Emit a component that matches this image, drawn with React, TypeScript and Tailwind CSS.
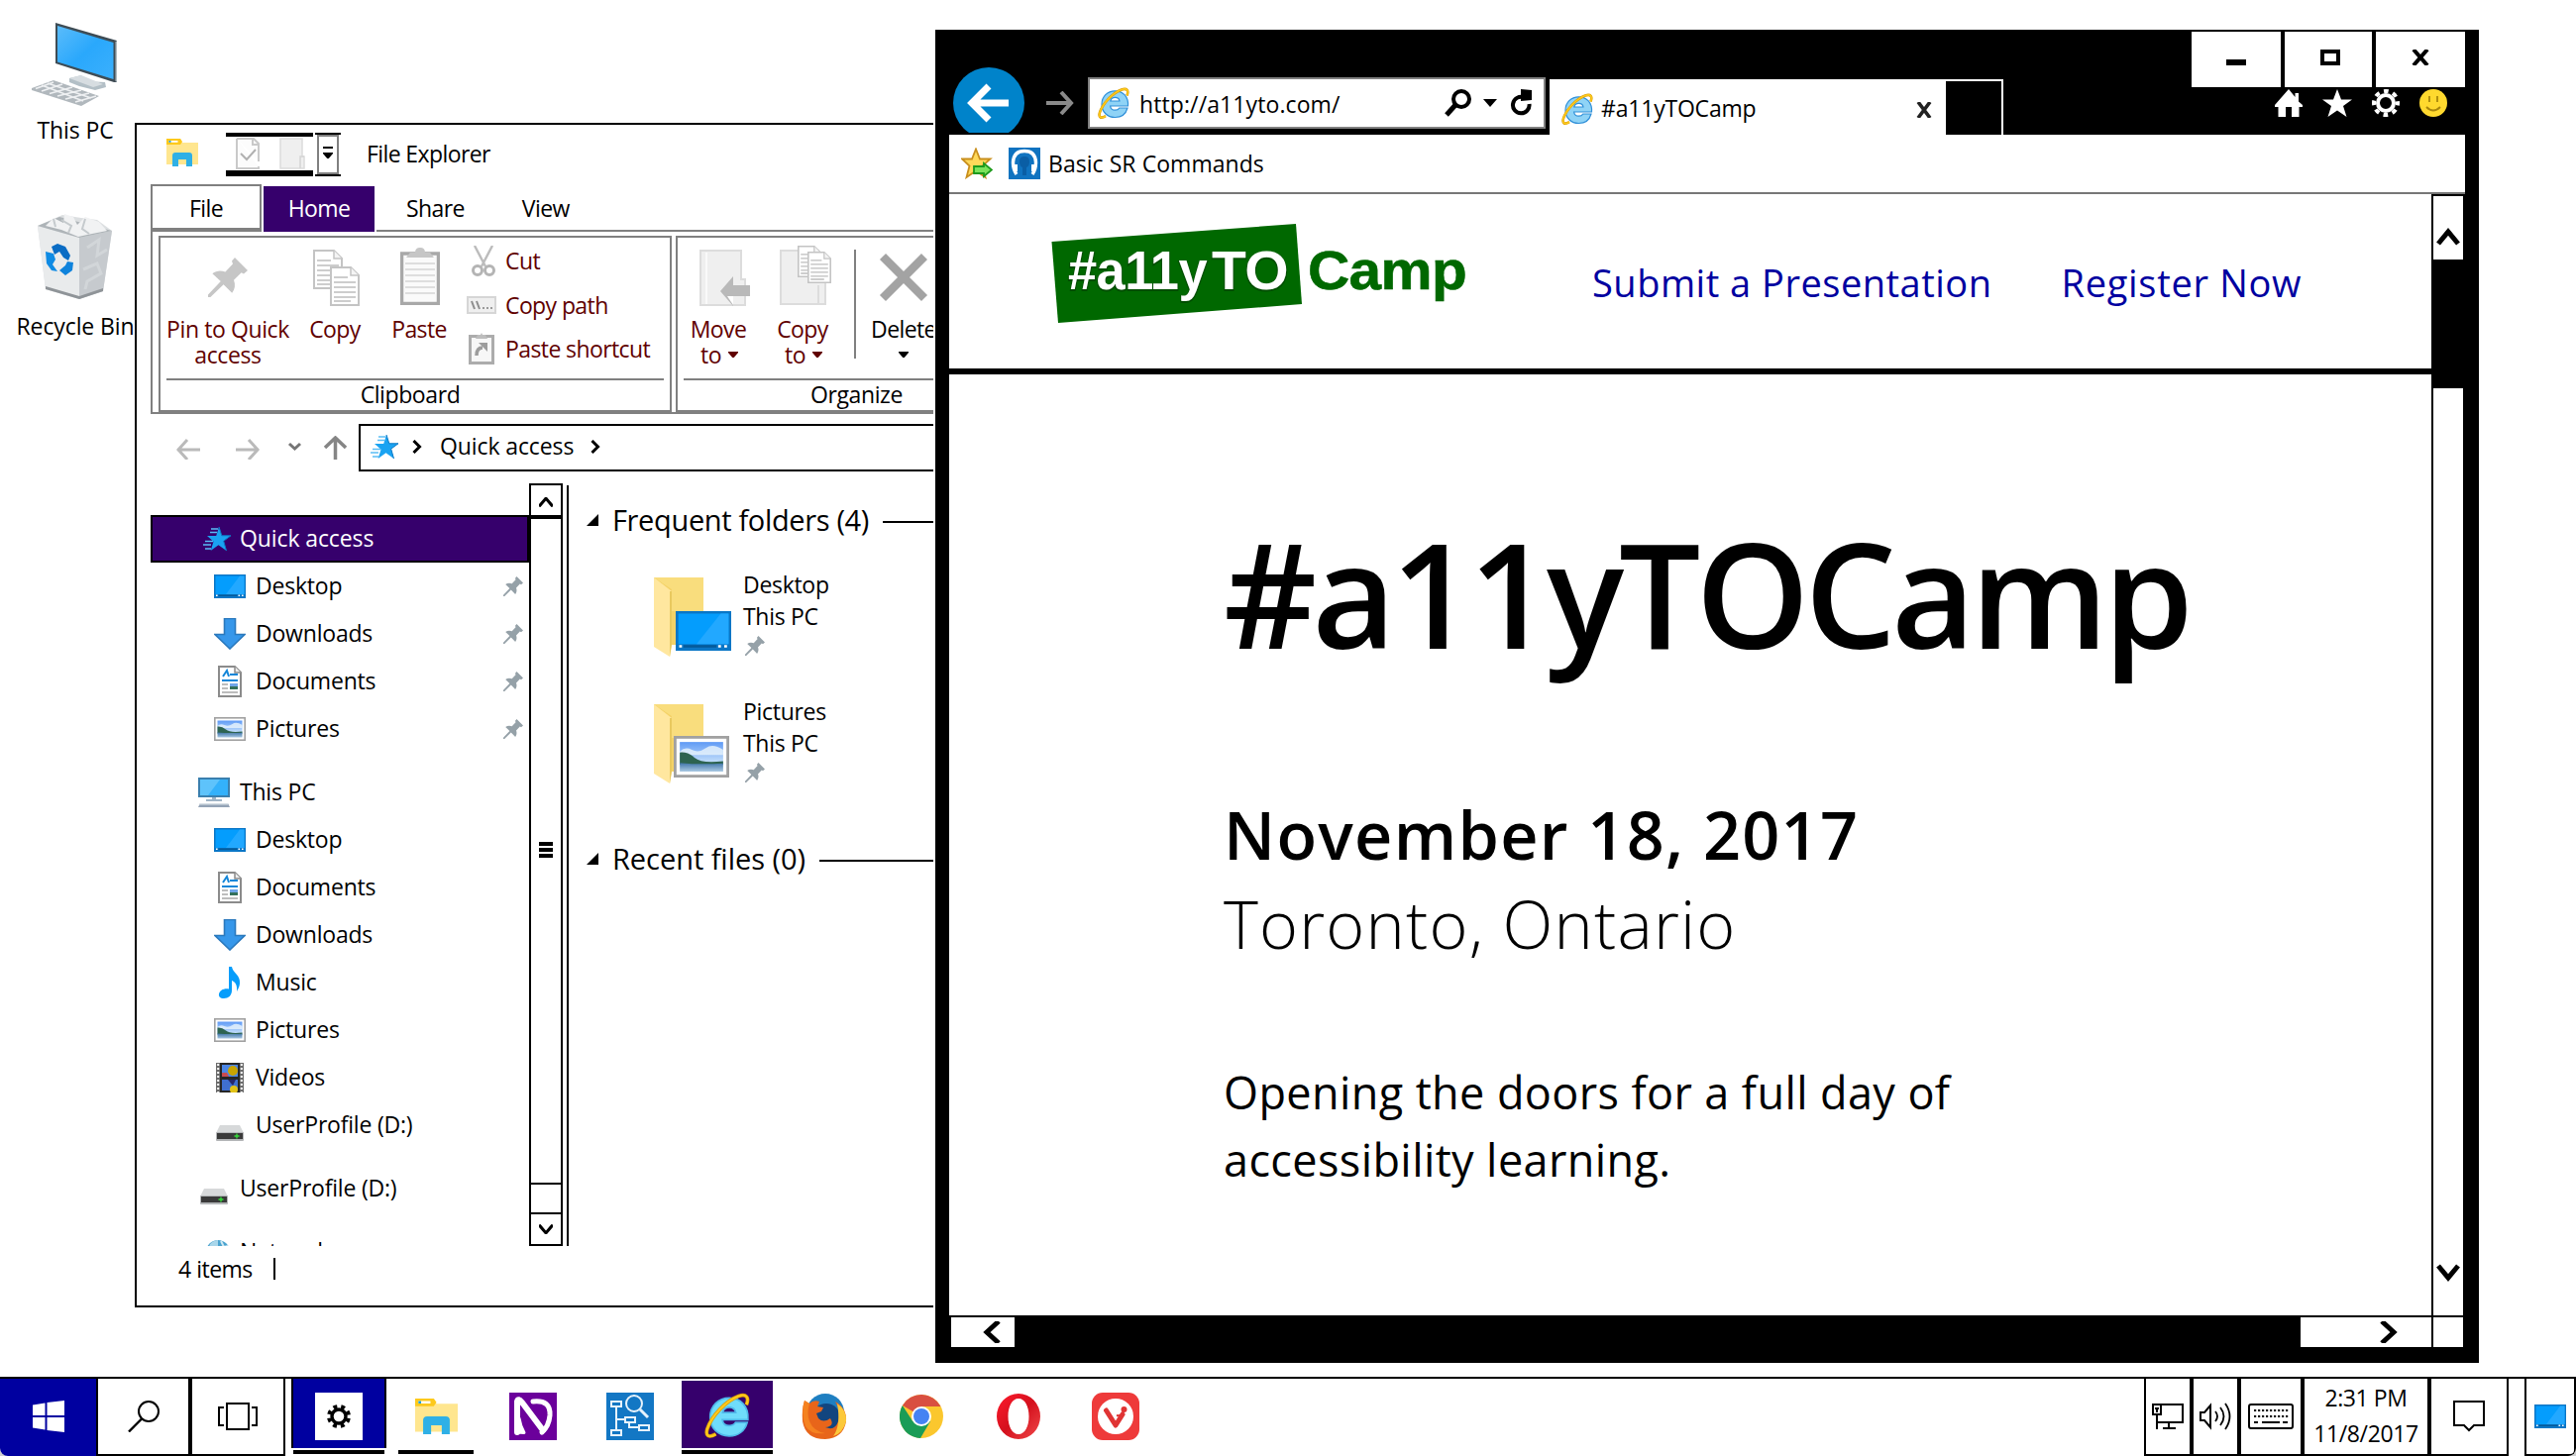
import React from "react";

type SvgProps = { className?: string };

/* ---------- shared icons ---------- */

const IeIcon = ({ className = "w-8 h-8", light = "#8fd3f6", dark = "#2f8fd8" }: SvgProps & { light?: string; dark?: string }) => (
  <svg viewBox="0 0 32 32" className={className}>
    <path
      d="M30.500 19H12.600c.3 2.600 2.100 4.200 4.900 4.200 2 0 3.500-.8 4.300-2.200h8.200C28.400 26.800 23.800 30.500 17.400 30.500 9.700 30.500 4 25 4 17.200 4 9.400 9.700 3.800 17.400 3.800 25.500 3.800 31.200 9.800 30.500 19ZM12.800 14h9.200c-.4-2.300-2.100-3.700-4.500-3.700s-4.200 1.400-4.700 3.700Z"
      fill={light}
      stroke={dark}
      strokeWidth="1.200"
    />
    <path
      d="M29.500 8.500C31.500 3.500 29.500.500 24 2.500 15 5.800 5 16.500 2 25.500c-1.500 5 1 6.500 6 3.700"
      fill="none"
      stroke="#d99a00"
      strokeWidth="2.600"
    />
    <path
      d="M29.500 8.500C31.500 3.500 29.500.500 24 2.500 15 5.800 5 16.500 2 25.500c-1.500 5 1 6.500 6 3.700"
      fill="none"
      stroke="#fcc81c"
      strokeWidth="1.600"
    />
  </svg>
);

const PinIcon = ({ className = "w-5 h-5", color = "#95a1a8" }: SvgProps & { color?: string }) => (
  <svg viewBox="0 0 20 20" className={className}>
    <path d="M13.500 0 20 6.500 18 8.200 16.800 7.600 13 11.400c.9 2.500.6 4.600-.9 6.500L7.800 13.600 1.200 20H0v-1.200L6.400 12 2.200 8.100c1.900-1.500 4-1.800 6.500-.9L12.500 3.200 12 1.800Z" fill={color} />
  </svg>
);

const QuickStar = () => (
  <svg viewBox="0 0 30 24" className="w-[30px] h-6 shrink-0">
    <path d="M18 0l2.800 8.800H30l-7.300 5.400L25.500 24 17.500 18.200 9.600 24l2.900-9.200L6 9h9.200Z" fill="#1aa3f2" />
    <path d="M10 2h7M9 5.500h7M4 14.500h8M2 18h8M4 22h6" stroke="#59bdf5" strokeWidth="1.300" />
    <path d="M18 0l2.800 8.800H30l-7.300 5.400L25.500 24" fill="none" stroke="#0b78c4" strokeWidth="1" />
  </svg>
);

const DesktopIcon = ({ className = "w-8 h-6" }: SvgProps) => (
  <svg viewBox="0 0 32 24" className={className} preserveAspectRatio="none">
    <rect width="32" height="24" fill="#0a76c6" />
    <rect x="1.500" y="1.500" width="29" height="18.500" fill="#049dfd" />
    <path d="M12 20 26 1.500h4.500V20Z" fill="#22a8ff" />
    <path d="M2 20.500h1.600v1.500H2zM24.500 20.500h1.600v1.500h-1.600zM28 20.500h1.600v1.500H28z" fill="#fff" />
    <path d="M4.500 20.500h19v1.500h-19z" fill="#055a99" />
  </svg>
);

const DownloadIcon = () => (
  <svg viewBox="0 0 32 32" className="w-8 h-8">
    <path d="M10.500.500h11V16.500H31L16 31 1 16.500h9.500Z" fill="#3697ea" stroke="#2b79bd" strokeWidth="1.600" />
  </svg>
);

const DocumentIcon = () => (
  <svg viewBox="0 0 24 32" className="w-6 h-8">
    <path d="M1 1h16l6 6v24H1Z" fill="#fff" stroke="#8b8b8b" strokeWidth="2" />
    <path d="M17 1v6h6" fill="#eee" stroke="#8b8b8b" strokeWidth="1.500" />
    <path d="M5 11 9 5l2 6M12 9h8M4 15h16" stroke="#1486d8" strokeWidth="2" fill="none" />
    <path d="M4 19h6M4 23h6M4 27h16" stroke="#a8a8a8" strokeWidth="1.600" />
    <rect x="12" y="18" width="8" height="3" fill="#6fa5e8" />
    <rect x="12" y="21" width="8" height="3" fill="#33705a" />
  </svg>
);

const PictureIcon = ({ className = "w-8 h-6" }: SvgProps) => (
  <svg viewBox="0 0 32 24" className={className} preserveAspectRatio="none">
    <defs>
      <linearGradient id="sky" x1="0" y1="0" x2="0" y2="1">
        <stop offset="0" stopColor="#5f9af5" />
        <stop offset="1" stopColor="#cfe6fb" />
      </linearGradient>
      <linearGradient id="sea" x1="0" y1="0" x2="0" y2="1">
        <stop offset="0" stopColor="#3f74a8" />
        <stop offset="1" stopColor="#a9c8e2" />
      </linearGradient>
    </defs>
    <rect x=".8" y=".8" width="30.400" height="22.400" fill="#fff" stroke="#a1a1a1" strokeWidth="1.600" />
    <rect x="3.500" y="3.500" width="25" height="13" fill="url(#sky)" />
    <path d="M3.500 9q3-3 7-1t8-1 10 1v3H3.500Z" fill="#e4f1fc" opacity=".85" />
    <path d="M3.500 9.500Q8 9 12 12.500t16.500 2v2h-25Z" fill="#2d6350" />
    <path d="M3.500 15.500q12 1.200 25 .3v4.700h-25Z" fill="url(#sea)" />
  </svg>
);

const MusicIcon = () => (
  <svg viewBox="0 0 24 32" className="w-6 h-8">
    <path d="M11 0h3c.6 6 9 8 8 17-.3 3-1.600 5.500-3 8 .6-6-1.200-9.500-5-11v10c0 5-3.500 8-8 8-4 0-5.500-2-5-4.500C1.600 24 6 21.500 11 22.500Z" fill="#069dfb" />
  </svg>
);

const VideoIcon = () => (
  <svg viewBox="0 0 28 30" className="w-7 h-[30px]">
    <rect width="28" height="30" fill="#6c6c6c" />
    <path d="M2.200 1v29M25.800 1v29" stroke="#fff" strokeWidth="2" strokeDasharray="2 2" />
    <rect x="4" width="20" height="30" fill="#262626" />
    <rect x="6" y="2" width="16" height="12" fill="#4b86e6" />
    <rect x="6" y="17" width="16" height="11" fill="#3f6fd0" />
    <circle cx="17" cy="8" r="5" fill="#c9a400" />
    <path d="M6 10h5l2 4H6Z" fill="#c94b50" />
    <circle cx="18" cy="27" r="4" fill="#e2c318" />
    <path d="M12 17h8l-3 6Z" fill="#26266a" />
    <path d="M4 15.500h20" stroke="#262626" strokeWidth="3" />
  </svg>
);

const DriveIcon = () => (
  <svg viewBox="0 0 28 16" className="w-7 h-4">
    <path d="M4 0h20l4 8H0Z" fill="#d7d9da" />
    <rect y="7" width="28" height="9" rx="1" fill="#b4b6b8" />
    <rect x="1" y="8" width="26" height="6" fill="#3a3a3a" />
    <path d="M18.500 11h5M21 8.500v5" stroke="#35e03a" strokeWidth="1.300" />
  </svg>
);

const ThisPcIcon = () => (
  <svg viewBox="0 0 32 30" className="w-8 h-[30px]">
    <rect x="1" y="1" width="30" height="18" fill="#5ec3fb" stroke="#3a7fae" strokeWidth="2" />
    <path d="M10 18 22 2h8v16Z" fill="#33b1fb" />
    <path d="M14 20h4v2h6v2H8v-2h6Z" fill="#9fb4c6" />
    <path d="M2 26h28l2 4H0Z" fill="#93a3b6" />
    <path d="M2 26h28v1.500H1Z" fill="#d5dde4" />
  </svg>
);

const NetworkIcon = () => (
  <svg viewBox="0 0 24 24" className="w-6 h-6">
    <circle cx="12" cy="12" r="12" fill="#4aa3cf" />
    <path d="M4 4q4-4 8-4v12L2 10Z" fill="#a9d6ea" />
    <path d="M15 1l3 6 4-1" stroke="#cfe9f4" strokeWidth="2" fill="none" />
  </svg>
);

const ExplorerIcon = ({ className = "w-8 h-7" }: SvgProps) => (
  <svg viewBox="0 0 32 28" className={className} preserveAspectRatio="none">
    <path d="M0 0h14l2 4h16v22H0Z" fill="#ffe68f" />
    <path d="M0 0h14l2 3-2 3H0Z" fill="#fdc91c" />
    <path d="M2.500 2h9v1.800h-9z" fill="#fff" />
    <path d="M2.500 2h2v1.800h-2z" fill="#1d9fdc" />
    <path d="M6 28V17q0-3 3-3h14q3 0 3 3v11h-6v-7h-8v7Z" fill="#2fb0e6" />
  </svg>
);

const CaretDown = ({ color = "#600000" }: { color?: string }) => (
  <svg viewBox="0 0 10 6" className="w-[10px] h-[6px]">
    <path d="M0 0h10v1L5.800 6H4.200L0 1Z" fill={color} />
  </svg>
);

/* ---------- desktop shortcuts ---------- */

const DesktopShortcuts = () => (
  <>
    <div className="absolute left-0 top-[23px] w-[152px] flex flex-col items-center tracking-[-0.1px]">
      <svg viewBox="0 0 88 84" className="w-[88px] h-[84px]">
        <defs>
          <linearGradient id="scr" x1="0" y1="0" x2="1" y2="1">
            <stop offset="0" stopColor="#5bbcfb" />
            <stop offset=".5" stopColor="#2aa8fc" />
            <stop offset="1" stopColor="#3bb0fd" />
          </linearGradient>
        </defs>
        <path d="M24 0 86 18 86 60 83 60 24 41Z" fill="#3e4c55" />
        <path d="M84.500 19.500 86 18V60l-1.500-1Z" fill="#aeb9c0" />
        <path d="M26 3 82.500 20V57L26 39.500Z" fill="url(#scr)" />
        <path d="M38 56 50 53 54 59 74 60 75 65 64 68 48 64 38 60Z" fill="#b3bfc6" />
        <path d="M38 56 50 53 72 62 62 65Z" fill="#d7dde1" />
        <path d="M0 66 22 58 68 74 50 84 0 68Z" fill="#b1b8bd" />
        <path d="M4 66.500 22 60M10 69 31 62M18 71.500 41 65M26 74 50 68M34 77 58 71M44 80 65 74M10 63 52 79M16 61 60 76" stroke="#eef0f2" strokeWidth="1.700" />
      </svg>
      <span className="mt-[8px] leading-8">This PC</span>
    </div>
    <div className="absolute left-0 top-[216px] w-[152px] flex flex-col items-center tracking-[-0.1px]">
      <svg viewBox="0 0 76 86" className="w-[76px] h-[86px]">
        <path d="M0 12 25 1 44 4 60 6 75 17 66 78 42 86 8 76Z" fill="#dcdfe1" />
        <path d="M42 24 75 17 66 78 42 86Z" fill="#c6cace" />
        <path d="M0 12 42 24V86L8 76Z" fill="#e9ebec" />
        <path d="M0 12 22 3 75 17 42 24Z" fill="#aeb4b8" />
        <path d="M8 12 16 4 26 9 27 0 36 3 40 11 48 3 62 8 70 17 50 21 41 23 24 16Z" fill="#f1f2f3" />
        <path d="M24 6 34 12 31 19M48 5 45 15 52 20M16 5 18 13" stroke="#c5cacd" strokeWidth="2" fill="none" />
        <path d="M50 34 62 26 60 42 70 36M46 56 60 50 64 60 50 68 48 76" stroke="#d2d6d9" strokeWidth="3" fill="none" />
        <path d="M8 73 42 83 66 75V78L42 86 8 76Z" fill="#8f9498" />
        <path d="M14 33 20 30 28 33 33 42 31 47 26 44 22 38 17 41Z" fill="#0a6cc4" />
        <path d="M8 38 16 40 18 46 15 51 20 58 14 57 9 50Z" fill="#0f8be4" />
        <path d="M30 48 36 49 35 57 28 62 22 57 28 52Z" fill="#0f83dc" />
      </svg>
      <span className="mt-[11px] leading-8">Recycle Bin</span>
    </div>
  </>
);

/* ---------- File Explorer ---------- */

const RibbonPage = ({ x, y, s = 1 }: { x: number; y: number; s?: number }) => (
  <g transform={`translate(${x} ${y}) scale(${s})`}>
    <path d="M1 1h20l8 8v30H1Z" fill="#fff" stroke="#c4c4c4" strokeWidth="2" />
    <path d="M21 1v8h8" fill="#f4f4f4" stroke="#c4c4c4" strokeWidth="1.500" />
    <path d="M4 11h14M4 16h22M4 21h22M4 26h22M4 31h22M4 35h17" stroke="#bdbdbd" strokeWidth="1.600" />
  </g>
);

const Ribbon = () => (
  <div className="ml-[14px] h-[184px] flex border-l-2 border-b-2 border-[#808080] pt-[4px] pl-[6px] gap-[4px] text-[#600000]">
    <div className="w-[518px] h-[178px] shrink-0 border-2 border-[#808080] flex flex-col">
      <div className="h-[144px] mx-[6px] border-b-2 border-[#808080] flex">
        <div className="w-[124px] flex flex-col items-center">
          <PinIcon className="w-10 h-10 mt-5" color="#c6c6c6" />
          <span className="mt-[19px] leading-[26px] text-center whitespace-nowrap tracking-[-0.4px]">
            Pin to Quick
            <br />
            access
          </span>
        </div>
        <div className="ml-[20px] w-[52px] flex flex-col items-center">
          <svg viewBox="0 0 48 58" className="w-12 h-[58px] mt-3 ml-[3px]">
            <RibbonPage x={0} y={0} />
            <RibbonPage x={17} y={17} />
          </svg>
          <span className="mt-[9px] leading-[26px]">Copy</span>
        </div>
        <div className="ml-[32px] w-[54px] flex flex-col items-center">
          <svg viewBox="0 0 40 58" className="w-10 h-[58px] mt-[10px] ml-[2px]">
            <rect x="1.500" y="6" width="37" height="50.500" fill="#fafafa" stroke="#a8a8a8" strokeWidth="3.500" />
            <path d="M6 10h28l-4-5h-5q0-5-5-5t-5 5h-5Z" fill="#c6c6c6" />
            <path d="M5 16h30M5 22h30M5 28h30M5 34h30M5 40h30M5 46h30" stroke="#dedede" strokeWidth="1.800" />
          </svg>
          <span className="mt-[11px] leading-[26px]">Paste</span>
        </div>
        <div className="ml-[19px] pt-[2px] flex flex-col">
          <div className="h-11 flex items-center">
            <svg viewBox="0 0 24 32" className="w-6 h-8 ml-[7px] mr-[10px]">
              <path d="M3 0 14 21M21 0 10 21" stroke="#bcbcbc" strokeWidth="2.400" />
              <circle cx="6" cy="25" r="4.500" fill="none" stroke="#b4b4b4" strokeWidth="3" />
              <circle cx="18" cy="25" r="4.500" fill="none" stroke="#b4b4b4" strokeWidth="3" />
            </svg>
            <span className="pb-[2px]">Cut</span>
          </div>
          <div className="h-11 flex items-center">
            <svg viewBox="0 0 30 18" className="w-[30px] h-[18px] ml-[2px] mr-[9px]">
              <rect x="1" y="1" width="28" height="16" fill="#efefef" stroke="#d6d6d6" strokeWidth="2" />
              <path d="M5 5l3 8M10 5l3 8" stroke="#8d8d8d" strokeWidth="2" />
              <path d="M16 11h2v2h-2zM20 11h2v2h-2zM24 11h2v2h-2z" fill="#9a9a9a" />
            </svg>
            <span className="pb-[1px]">Copy path</span>
          </div>
          <div className="h-11 flex items-center">
            <svg viewBox="0 0 26 32" className="w-[26px] h-8 ml-[4px] mr-[11px]">
              <rect x="1.500" y="3.500" width="23" height="27" fill="#f7f7f7" stroke="#acacac" strokeWidth="3" />
              <path d="M7 6h12l-2-4h-3L13 0l-1 2H9Z" fill="#bdbdbd" />
              <path d="M8 23q0-8 6-8" stroke="#9c9c9c" strokeWidth="3.500" fill="none" />
              <path d="M10 10h9v9Z" fill="#9c9c9c" />
            </svg>
            <span className="whitespace-nowrap">Paste shortcut</span>
          </div>
        </div>
      </div>
      <div className="text-center text-black leading-[28px] pr-[10px] tracking-[-0.4px]">Clipboard</div>
    </div>
    <div className="w-[400px] h-[178px] shrink-0 border-2 border-r-0 border-[#808080] flex flex-col">
      <div className="h-[144px] ml-[6px] border-b-2 border-[#808080] flex">
        <div className="ml-[7px] w-[56px] flex flex-col items-center">
          <svg viewBox="0 0 52 58" className="w-[52px] h-[58px] mt-3 self-start ml-[9px] shrink-0">
            <path d="M1 1h41v29l4 0v26H1Z" fill="#efefef" stroke="#dcdcdc" strokeWidth="2" />
            <path d="M7 3v52" stroke="#fafafa" strokeWidth="2" />
            <path d="M21 42 34 27v9h17v11H34v10Z" fill="#b9b9b9" />
            <path d="M28 47h6v9Z" fill="#fff" />
          </svg>
          <span className="mt-[9px] leading-[26px]">Move</span>
          <span className="leading-[26px] flex items-center gap-[7px] ml-[2px]">
            to <CaretDown />
          </span>
        </div>
        <div className="ml-[31px] w-[52px] flex flex-col items-center">
          <svg viewBox="0 0 52 60" className="w-[52px] h-[60px] mt-2 ml-[6px] shrink-0">
            <path d="M1 5h38v20h7v34H1Z" fill="#efefef" stroke="#dcdcdc" strokeWidth="2" />
            <path d="M39 40v18" stroke="#dcdcdc" strokeWidth="2" />
            <RibbonPage x={18} y={0} s={0.8} />
            <RibbonPage x={28} y={6} s={0.8} />
          </svg>
          <span className="mt-[11px] leading-[26px]">Copy</span>
          <span className="leading-[26px] flex items-center gap-[7px] ml-[2px]">
            to <CaretDown />
          </span>
        </div>
        <div className="ml-[26px] mt-3 w-[2px] h-[110px] bg-[#808080]" />
        <div className="ml-[15px] w-[66px] flex flex-col items-center text-black">
          <svg viewBox="0 0 50 50" className="w-[50px] h-[50px] mt-[15px] shrink-0">
            <path d="M4 4 46 46M46 4 4 46" stroke="#a3a3a3" strokeWidth="8.500" />
          </svg>
          <span className="mt-[14px] leading-[26px]">Delete</span>
          <span className="h-[26px] flex items-center">
            <CaretDown color="#000" />
          </span>
        </div>
      </div>
      <div className="pl-[134px] text-black leading-[28px] tracking-[-0.4px]">Organize</div>
    </div>
  </div>
);

type TreeItem = { label: string; icon: React.ReactNode; root?: boolean; pin?: boolean };

const TreeRow = ({ label, icon, root, pin }: TreeItem) => (
  <div className={root ? "h-12 shrink-0 flex items-center pl-12 pr-[6px]" : "h-12 shrink-0 flex items-center pl-16 pr-[6px]"}>
    <div className="w-8 h-8 mr-[10px] flex items-center justify-center">{icon}</div>
    <span className="leading-[46px] pb-[2px] grow whitespace-nowrap">{label}</span>
    {pin && <PinIcon />}
  </div>
);

const Drive = () => (
  <div className="pt-4">
    <DriveIcon />
  </div>
);

const quick: TreeItem[] = [
  { label: "Desktop", icon: <DesktopIcon />, pin: true },
  { label: "Downloads", icon: <DownloadIcon />, pin: true },
  { label: "Documents", icon: <DocumentIcon />, pin: true },
  { label: "Pictures", icon: <PictureIcon />, pin: true },
];

const pc: TreeItem[] = [
  { label: "This PC", icon: <ThisPcIcon />, root: true },
  { label: "Desktop", icon: <DesktopIcon /> },
  { label: "Documents", icon: <DocumentIcon /> },
  { label: "Downloads", icon: <DownloadIcon /> },
  { label: "Music", icon: <MusicIcon /> },
  { label: "Pictures", icon: <PictureIcon /> },
  { label: "Videos", icon: <VideoIcon /> },
  { label: "UserProfile (D:)", icon: <Drive /> },
];

const GroupTitle = ({ children }: { children: React.ReactNode }) => (
  <div className="h-10 flex items-center">
    <svg viewBox="0 0 12 12" className="w-3 h-3 mb-1">
      <path d="M12 0V12H0Z" fill="#000" />
    </svg>
    {children}
    <div className="grow h-[2px] bg-black" />
  </div>
);

const FolderTile = ({ name, thumb }: { name: string; thumb: React.ReactNode }) => (
  <div className="h-[128px] pl-[68px] flex">
    <div className="relative w-[80px] h-[80px] mt-[2px]">
      <svg viewBox="0 0 50 80" className="w-[50px] h-[80px]">
        <path d="M0 0h50v68H16Z" fill="#f4d267" />
        <path d="M0 0h50v34H18V12Z" fill="#f9dd7d" />
        <path d="M0 0 18 14V68L16 80 0 70Z" fill="#ffe79f" />
        <path d="M16 14h2v54l-2 12Z" fill="#e9c95f" />
      </svg>
      {thumb}
    </div>
    <div className="ml-[10px] flex flex-col mt-[-7px] tracking-[-0.3px]">
      <span className="leading-8">{name}</span>
      <span className="leading-8">This PC</span>
      <PinIcon className="w-5 h-5 mt-[4px] ml-[2px]" />
    </div>
  </div>
);

const Chevron = ({ dir, className }: { dir: "up" | "down"; className: string }) => {
  const d = {
    up: "M0 9.500V7L6 0h2l6 7v2.500L12.500 10 7 3.500 1.500 10Z",
    down: "M0 .500V3l6 7h2l6-7V.500L12.500 0 7 6.500 1.500 0Z",
  }[dir];
  return (
    <svg viewBox="0 0 14 10" className={className}>
      <path d={d} fill="#000" />
    </svg>
  );
};

const SmallRight = () => (
  <svg viewBox="0 0 10 14" className="w-[10px] h-[14px]">
    <path d="M1.500 1 7.500 7 1.500 13" stroke="#000" strokeWidth="3" fill="none" />
  </svg>
);

const FileExplorer = () => (
  <div className="absolute left-[136px] top-[124px] w-[806px] h-[1196px] overflow-hidden bg-white border-2 border-r-0 border-black flex flex-col">
    <div className="h-[60px] flex items-start">
      <ExplorerIcon className="w-8 h-7 ml-[30px] mt-[14px]" />
      <div className="ml-[28px] mt-[8px] w-[88px] h-[44px] border-t-4 border-b-[6px] border-black flex items-center">
        <svg viewBox="0 0 24 32" className="w-6 h-8 ml-[10px]">
          <path d="M1 1h17l5 5v18M23 29V31H1V1M16 31H1" fill="#fcfcfc" stroke="#c9c9c9" strokeWidth="2" />
          <path d="M17 1v6h6" fill="none" stroke="#c9c9c9" strokeWidth="2" />
          <path d="M5 16 11 22 20 12" stroke="#b0b0b0" strokeWidth="2" fill="none" />
        </svg>
        <svg viewBox="0 0 26 32" className="w-[26px] h-8 ml-5">
          <path d="M1 1h22v18h2v12H1Z" fill="#efefef" stroke="#dcdcdc" strokeWidth="1.500" />
          <path d="M21 31V19h4" stroke="#d5d5d5" strokeWidth="1.500" fill="none" />
        </svg>
      </div>
      <div className="ml-[2px] mt-[8px] w-[26px] h-[44px] border-y-2 border-black px-[2px]">
        <div className="h-[40px] border-2 border-[#808080] flex flex-col items-center pt-[10px]">
          <div className="w-[10px] h-[2px] bg-black mb-[4px]" />
          <CaretDown color="#000" />
        </div>
      </div>
      <span className="ml-[26px] mt-[13px] leading-[32px]">File Explorer</span>
    </div>
    <div className="h-12 ml-[14px] flex">
      <div className="w-[112px] border-2 border-b-4 border-[#808080] text-center leading-[44px]">File</div>
      <div className="w-[2px]" />
      <div className="w-[112px] mt-[2px] bg-[#36006c] text-white text-center leading-[44px]">Home</div>
      <div className="w-[2px]" />
      <div className="grow border-b-2 border-[#808080] flex leading-[48px]">
        <span className="ml-[30px]">Share</span>
        <span className="ml-[58px]">View</span>
      </div>
    </div>
    <div className="shrink-0">
      <Ribbon />
    </div>
    <div className="mt-[10px] h-12 flex items-center shrink-0">
      <svg viewBox="0 0 172 24" className="w-[172px] h-6 ml-[40px]">
        <path d="M1 14H24M11 4 2 14 11 24" stroke="#bababa" strokeWidth="3" fill="none" />
        <path d="M60 14H83M73 4 82 14 73 24" stroke="#bababa" strokeWidth="3" fill="none" />
        <path d="M114 8 119.500 13 125 8" stroke="#757575" strokeWidth="3" fill="none" />
        <path d="M160.500 24V3M150 12 160.500 2 171 12" stroke="#858585" strokeWidth="3.500" fill="none" />
      </svg>
      <div className="ml-[12px] grow h-12 border-2 border-r-0 border-black flex items-center pl-[8px] pb-[2px] tracking-[-0.1px]">
        <QuickStar />
        <div className="ml-[14px]">
          <SmallRight />
        </div>
        <span className="ml-[18px] mr-[17px] leading-[40px] pb-[3px]">Quick access</span>
        <SmallRight />
      </div>
    </div>
    <div className="mt-[12px] h-[770px] flex shrink-0">
      <div className="w-[382px] ml-[14px] pt-8 flex flex-col overflow-hidden tracking-[-0.2px]">
        <div className="h-12 shrink-0 border-2 border-black bg-[#36006c] text-white flex items-center pl-[49px]">
          <QuickStar />
          <span className="ml-[9px] leading-[40px] pb-[2px] tracking-[-0.1px]">Quick access</span>
        </div>
        {quick.map((it) => (
          <TreeRow key={it.label} {...it} />
        ))}
        <div className="h-4 shrink-0" />
        {pc.map((it) => (
          <TreeRow key={it.label} {...it} />
        ))}
        <div className="h-4 shrink-0" />
        <TreeRow label="UserProfile (D:)" icon={<Drive />} root />
        <div className="h-4 shrink-0" />
        <TreeRow
          label="Network"
          icon={
            <div className="pl-[8px]">
              <NetworkIcon />
            </div>
          }
          root
        />
      </div>
      <div className="w-[34px] border-2 border-black flex flex-col items-center">
        <div className="h-[30px] w-full flex justify-center items-center">
          <Chevron dir="up" className="w-[14px] h-[10px] mb-[-4px]" />
        </div>
        <div className="h-[704px] w-full shrink-0 border-t-4 border-black flex flex-col items-center justify-center gap-[2px] pb-8">
          <div className="w-[14px] h-1 bg-black" />
          <div className="w-[14px] h-1 bg-black" />
          <div className="w-[14px] h-1 bg-black" />
        </div>
        <div className="h-[2px] w-full bg-black shrink-0 mt-[-30px]" />
        <div className="h-7 w-full shrink-0 bg-white" />
        <div className="h-[2px] w-full bg-black shrink-0" />
        <Chevron dir="down" className="w-[14px] h-[10px] mt-[10px]" />
      </div>
      <div className="ml-1 mt-[2px] w-[2px] h-[768px] bg-black" />
      <div className="ml-[18px] grow flex flex-col pt-[19px]">
        <GroupTitle>
          <span className="ml-[14px] mr-[14px] text-[29px] tracking-[-0.35px] leading-[38px] pb-[4px] whitespace-nowrap">Frequent folders (4)</span>
        </GroupTitle>
        <div className="h-[34px] shrink-0" />
        <FolderTile name="Desktop" thumb={<DesktopIcon className="absolute left-[22px] top-[34px] w-14 h-10" />} />
        <FolderTile name="Pictures" thumb={<PictureIcon className="absolute left-[20px] top-[32px] w-14 h-[42px]" />} />
        <div className="h-[12px] shrink-0" />
        <GroupTitle>
          <span className="ml-[14px] mr-[14px] text-[29px] tracking-[-0.05px] leading-[38px] pb-[4px] whitespace-nowrap">Recent files (0)</span>
        </GroupTitle>
      </div>
    </div>
    <div className="mt-[6px] h-[34px] flex items-center">
      <span className="ml-[42px] leading-8 w-[96px] tracking-[-0.5px]">4 items</span>
      <div className="w-[2px] h-[22px] bg-black" />
    </div>
  </div>
);

/* ---------- Browser ---------- */

const BrowserHeader = () => (
  <div className="h-[106px] flex items-start">
    <div className="ml-[18px] mt-[38px] w-[72px] h-[66px] overflow-hidden">
      <svg viewBox="0 0 72 72" className="w-[72px] h-[72px]">
        <circle cx="36" cy="36" r="36" fill="#0083ca" />
        <path d="M56 36H18M36 19 19 36 36 53" stroke="#fff" strokeWidth="7" fill="none" />
      </svg>
    </div>
    <svg viewBox="0 0 28 24" className="ml-[22px] mt-[62px] w-7 h-6">
      <path d="M0 12H25M15 1 25 12 15 23" stroke="#8a8a8a" strokeWidth="4" fill="none" />
    </svg>
    <div className="ml-[14px] mt-[48px] w-[462px] h-[52px] bg-white border-2 border-[#808080] flex items-center">
      <IeIcon className="w-8 h-8 ml-2" />
      <span className="ml-[10px] grow leading-[44px] pt-[1px] tracking-[0.1px]">http://a11yto.com/</span>
      <svg viewBox="0 0 88 28" className="w-[88px] h-7 mr-[12px]">
        <circle cx="17" cy="10" r="8" fill="none" stroke="#000" strokeWidth="4" />
        <path d="M11 16 2 26" stroke="#000" strokeWidth="5" />
        <path d="M39 10h14l-7 8Z" fill="#000" />
        <path d="M85.500 15A8.300 8.300 0 1 1 80 8.200" fill="none" stroke="#000" strokeWidth="4" />
        <path d="M77 0 88 1V11L77 12Z" fill="#000" />
      </svg>
    </div>
    <div className="ml-[4px] mt-[50px] w-[400px] h-14 bg-white flex items-center">
      <IeIcon className="w-8 h-8 ml-3 mb-[-4px]" />
      <span className="ml-[8px] grow leading-[56px] pt-[1px] tracking-[-0.2px]">#a11yTOCamp</span>
      <svg viewBox="0 0 16 16" className="w-4 h-4 mr-[14px] mb-[-5px]">
        <path d="M2 0 14 16M14 0 2 16" stroke="#222" strokeWidth="3.600" />
      </svg>
    </div>
    <div className="mt-[50px] w-[58px] h-14 border-t-2 border-r-2 border-white" />
    <div className="ml-auto mr-[14px] mt-[2px]">
      <div className="flex gap-1 h-14">
        <div className="w-[90px] bg-white flex items-center justify-center">
          <div className="w-5 h-[6px] bg-black mt-[6px]" />
        </div>
        <div className="w-[88px] bg-white flex items-center justify-center">
          <div className="w-5 h-4 border-[4px] border-black ml-1 mb-[4px]" />
        </div>
        <div className="w-[90px] bg-white flex items-center justify-center">
          <svg viewBox="0 0 18 16" className="w-[18px] h-4 mb-[4px]">
            <path d="M2 0 16 16M16 0 2 16" stroke="#000" strokeWidth="4" />
          </svg>
        </div>
      </div>
      <div className="mt-[2px] flex justify-end items-center gap-[20px] mr-[18px]">
        <svg viewBox="0 0 28 28" className="w-7 h-7">
          <path d="M14 0 20.500 8V4h3.500v8.500L28 16v2h-3.500v10H17V18h-6v10H3.500V18H0v-2Z" fill="#fff" />
        </svg>
        <svg viewBox="0 0 30 28" className="w-[30px] h-7">
          <path d="M15 0l4 10.500h11L21 17l3.500 11L15 21.500 5.500 28 9 17 0 10.500h11Z" fill="#fff" />
        </svg>
        <svg viewBox="0 0 28 28" className="w-7 h-7">
          <circle cx="14" cy="14" r="8" fill="none" stroke="#fff" strokeWidth="4" />
          <circle cx="14" cy="14" r="12" fill="none" stroke="#fff" strokeWidth="4" strokeDasharray="4.700 4.725" strokeDashoffset="2.350" />
        </svg>
        <svg viewBox="0 0 28 28" className="w-[28px] h-7">
          <circle cx="14" cy="14" r="14" fill="#ffd92e" />
          <path d="M10 7v6M18 7v6M7 18q7 7 14 0" stroke="#a8860c" strokeWidth="1.800" fill="none" />
        </svg>
      </div>
    </div>
  </div>
);

const CampLogo = () => (
  <svg viewBox="0 0 424 106" className="w-[424px] h-[106px] shrink-0" fontFamily="'Liberation Sans', Arial, sans-serif" fontWeight="700" fontSize="56">
    <path d="M.500 20 247 2 253 83 7 102Z" fill="#006800" />
    <g fill="#003c00" stroke="#003c00" strokeWidth="2" opacity=".6">
      <text x="17" y="69" textLength="140" lengthAdjust="spacingAndGlyphs">#a11y</text>
      <text x="162" y="69" textLength="77" lengthAdjust="spacingAndGlyphs">TO</text>
    </g>
    <g fill="#fff">
      <text x="17" y="68" textLength="140" lengthAdjust="spacingAndGlyphs">#a11y</text>
      <text x="162" y="68" textLength="77" lengthAdjust="spacingAndGlyphs">TO</text>
    </g>
    <text x="259" y="68" fill="#006800" stroke="#006800" strokeWidth=".6" textLength="160" lengthAdjust="spacingAndGlyphs">Camp</text>
  </svg>
);

const Browser = () => (
  <div className="absolute left-[944px] top-[30px] w-[1558px] h-[1346px] bg-black flex flex-col">
    <BrowserHeader />
    <div className="ml-[14px] w-[1530px] h-[60px] shrink-0 bg-white border-b-2 border-[#777] flex items-center">
      <svg viewBox="0 0 32 32" className="w-8 h-8 ml-[12px]">
        <path d="M15 1.500 19 11.500H29.500L21.500 18.500 24.500 30 15 23.500 5.500 30 8.500 18.500 1 11.500H11Z" fill="#ffd95a" stroke="#c98f1d" strokeWidth="1.800" />
        <path d="M13 19h10v-3l8 6.500-8 6.500v-3H13Z" fill="#7be35c" stroke="#1c9a1c" strokeWidth="1.800" />
      </svg>
      <svg viewBox="0 0 32 32" className="w-8 h-8 ml-4">
        <rect width="32" height="32" fill="#1073c0" />
        <path d="M8 27Q4.500 22 4.500 15 5 3.500 16 3.500T27.500 15Q27.500 22 24 27" stroke="#fff" strokeWidth="3.400" fill="none" />
        <path d="M7 17v7M25 17v7" stroke="#fff" strokeWidth="4" />
        <path d="M11 14q0-5 5-5t5 5-3 6v8h-4v-8q-3-1-3-6Z" fill="#0a5ea5" />
      </svg>
      <span className="ml-[8px] leading-[44px] pb-[1px] tracking-[0.05px]">Basic SR Commands</span>
    </div>
    <div className="ml-[14px] h-[1132px] flex shrink-0">
      <div className="w-[1496px] bg-white flex flex-col">
        <div className="h-[182px] border-b-[6px] border-black flex items-start text-[38px] leading-[52px] text-[#0000a0] whitespace-nowrap">
          <div className="ml-[103px] mt-[28px]">
            <CampLogo />
          </div>
          <span className="ml-[122px] mt-[63px] tracking-[0.5px]">Submit a Presentation</span>
          <span className="ml-[70px] mt-[63px] tracking-[0.7px]">Register Now</span>
        </div>
        <div className="pl-[277px] whitespace-nowrap">
          <h1 className="mt-[148px] text-[146px] leading-[146px] font-semibold tracking-[-5px]">#a11yTOCamp</h1>
          <p className="mt-[125px] text-[66.500px] leading-[90px] font-semibold tracking-[1.3px]">November 18, 2017</p>
          <p className="text-[66.500px] leading-[90px] font-light tracking-[1.2px]">Toronto, Ontario</p>
          <p className="mt-[92px] text-[45px] leading-[68px] tracking-[0.4px]">
            Opening the doors for a full day of
            <br />
            accessibility learning.
          </p>
        </div>
      </div>
      <div className="w-[32px] border-l-2 border-black flex flex-col">
        <div className="mt-[2px] h-16 bg-white flex items-center justify-center">
          <svg viewBox="0 0 24 18" className="w-6 h-[18px] mt-[18px]">
            <path d="M2 16 12 4 22 16" stroke="#000" strokeWidth="5" fill="none" />
          </svg>
        </div>
        <div className="h-[130px]" />
        <div className="grow bg-white flex items-end justify-center pb-[34px]">
          <svg viewBox="0 0 24 18" className="w-6 h-[18px]">
            <path d="M2 2 12 14 22 2" stroke="#000" strokeWidth="5" fill="none" />
          </svg>
        </div>
      </div>
    </div>
    <div className="ml-[16px] mt-[2px] h-[30px] flex">
      <div className="w-16 bg-white flex items-center justify-center">
        <svg viewBox="0 0 18 22" className="w-[18px] h-[22px] ml-[18px]">
          <path d="M16 0 4 11 16 22" stroke="#000" strokeWidth="5" fill="none" />
        </svg>
      </div>
      <div className="w-[1298px]" />
      <div className="w-[132px] bg-white flex items-center">
        <svg viewBox="0 0 18 22" className="w-[18px] h-[22px] ml-[80px]">
          <path d="M2 0 14 11 2 22" stroke="#000" strokeWidth="5" fill="none" />
        </svg>
      </div>
      <div className="ml-[2px] w-[30px] bg-white" />
    </div>
  </div>
);

/* ---------- Taskbar ---------- */

const Taskbar = () => (
  <div className="absolute left-0 top-[1390px] w-[2600px] h-20 bg-[#cfcfcf]">
    <div className="h-20 bg-white border-t-2 border-black flex items-start rounded-b-[8px] overflow-hidden">
      <div className="w-[97px] h-20 mt-[-2px] bg-[#0000a0] flex items-center justify-center">
        <svg viewBox="0 0 32 32" className="w-8 h-8">
          <path d="M0 4.500 12.500 2.500V15H0ZM14.500 2 32 0V15H14.500ZM0 17H12.500V29.500L0 27.500ZM14.500 17H32V32L14.500 30Z" fill="#fff" />
        </svg>
      </div>
      <div className="w-[95px] h-[78px] border-2 border-t-0 border-black flex items-center justify-center">
        <svg viewBox="0 0 32 32" className="w-8 h-8">
          <circle cx="21" cy="11" r="10" fill="none" stroke="#000" strokeWidth="2" />
          <path d="M14 18.500 1 31.500" stroke="#000" strokeWidth="2.400" />
        </svg>
      </div>
      <div className="w-[96px] h-[78px] border-2 border-t-0 border-black flex items-center justify-center">
        <svg viewBox="0 0 40 28" className="w-10 h-7">
          <path d="M9 1H31V27H9ZM6 5H1V23H6M34 5H39V23H34" fill="none" stroke="#000" strokeWidth="2" />
        </svg>
      </div>
      <div className="ml-[6px] w-[96px] flex flex-col items-center">
        <div className="w-full h-[70px] bg-[#0000a0] border-x-2 border-black flex items-center justify-center">
          <div className="w-12 h-12 bg-white flex items-center justify-center mb-[-6px]">
            <svg viewBox="0 0 24 24" className="w-6 h-6">
              <circle cx="12" cy="12" r="7" fill="none" stroke="#000" strokeWidth="3.400" />
              <circle cx="12" cy="12" r="10" fill="none" stroke="#000" strokeWidth="4" strokeDasharray="3.900 3.954" strokeDashoffset="5.900" />
            </svg>
          </div>
        </div>
        <div className="mt-[2px] w-[92px] h-1 bg-black" />
      </div>
      <div className="ml-[12px] w-[76px] flex flex-col items-center">
        <div className="h-[70px] flex items-center">
          <ExplorerIcon className="w-[43px] h-9 mt-[6px]" />
        </div>
        <div className="mt-[2px] w-[76px] h-1 bg-black" />
      </div>
      <svg viewBox="0 0 48 48" className="w-12 h-12 ml-[36px] mt-[14px]">
        <rect width="48" height="48" fill="#6b009b" />
        <path d="M8 40V9Q9 5 13 10L34 38" fill="none" stroke="#fff" strokeWidth="6" strokeLinejoin="round" strokeLinecap="round" />
        <path d="M7.500 22V40L15 40.500Q11 33 10 26Z" fill="#fff" stroke="#fff" strokeWidth="3" strokeLinejoin="round" />
        <path d="M24 9Q42 7 41 23 40 34 33 40" fill="none" stroke="#fff" strokeWidth="5" strokeLinecap="round" />
      </svg>
      <svg viewBox="0 0 48 48" className="w-12 h-12 ml-[50px] mt-[14px]">
        <rect width="48" height="48" fill="#1377c4" />
        <g fill="none" stroke="#e6f2fb" strokeWidth="2">
          <path d="M5 9H15V14H5ZM5 38H15V43H5ZM19 25H29V30H19ZM33 33H43V38H33ZM10 14V38M10 27H19M23 30V35H33" />
          <circle cx="28" cy="11" r="8" />
          <path d="M34 17 42 25" strokeWidth="3" />
        </g>
      </svg>
      <div className="ml-[28px] mt-[2px] w-[92px] flex flex-col">
        <div className="h-[68px] bg-[#36006c] flex items-center justify-center">
          <IeIcon className="w-[46px] h-[46px] mt-[2px]" light="#6fdcfb" dark="#4fb9ea" />
        </div>
        <div className="mt-[2px] h-1 bg-black" />
      </div>
      <svg viewBox="0 0 46 46" className="w-[46px] h-[46px] ml-[29px] mt-[15px]">
        <circle cx="24" cy="19" r="19" fill="#1f7fc1" />
        <circle cx="25" cy="24" r="14" fill="#12457f" />
        <path d="M3 7 8 10Q12 6 18 8L16 13 22 14 20 18 15 20 17 25Q22 30 29 25 34 33 24 34 34 38 37 28 40 18 34 8 46 15 45 28 42 45 24 46 4 46 1 28 0 16 3 7Z" fill="#e8651a" />
        <path d="M36 10Q46 17 45 28 42 40 32 43 40 32 36 10Z" fill="#fcc93a" />
        <path d="M3 7 8 10Q5 20 8 28 12 38 24 40 10 42 4 33 -1 20 3 7Z" fill="#f58220" />
      </svg>
      <svg viewBox="0 0 44 44" className="w-[44px] h-[44px] ml-[53px] mt-[16px]">
        <circle cx="22" cy="22" r="22" fill="#fbc72e" />
        <path d="M22 22 2.900 11A22 22 0 0 1 41.500 12H22Z" fill="#d94f41" />
        <path d="M2.900 11A22 22 0 0 0 21 44L31 27 13.300 27Z" fill="#1a9c57" />
        <circle cx="22" cy="22" r="10" fill="#fff" />
        <circle cx="22" cy="22" r="8" fill="#4583f3" />
      </svg>
      <svg viewBox="0 0 44 46" className="w-[44px] h-[46px] ml-[54px] mt-[15px]">
        <defs>
          <linearGradient id="op" x1="0" y1="0" x2="1" y2="1">
            <stop offset="0" stopColor="#ff1b2d" />
            <stop offset=".5" stopColor="#d4101d" />
            <stop offset="1" stopColor="#f04a4a" />
          </linearGradient>
        </defs>
        <path fillRule="evenodd" d="M22 0a22 23 0 1 1 0 46 22 23 0 1 1 0-46Zm0 5c-6.500 0-10.500 8-10.500 18S15.500 41 22 41s10.500-8 10.500-18S28.500 5 22 5Z" fill="url(#op)" />
      </svg>
      <svg viewBox="0 0 48 48" className="w-12 h-12 ml-[52px] mt-[14px]">
        <rect width="48" height="48" rx="11" fill="#ee3a3a" />
        <circle cx="24" cy="24" r="18" fill="#fff" />
        <path d="M14.500 18 24 33 31 22" stroke="#e03434" strokeWidth="5" fill="none" strokeLinecap="round" strokeLinejoin="round" />
        <circle cx="32.500" cy="17" r="3" fill="#e03434" />
        <path d="M25 23q5 1 7-4" stroke="#e03434" strokeWidth="2" fill="none" />
      </svg>
      <div className="ml-auto flex h-[78px]">
        <div className="w-[48px] border-2 border-t-0 border-black flex items-center justify-center">
          <svg viewBox="0 0 32 26" className="w-8 h-[26px]">
            <path d="M9 1H31V19H5M17 19v5M11 25H24M5 11V26M1 1H9V11H1ZM3 5h4M5 5v4" fill="none" stroke="#000" strokeWidth="2" />
          </svg>
        </div>
        <div className="w-[48px] border-2 border-t-0 border-black flex items-center justify-center">
          <svg viewBox="0 0 32 28" className="w-8 h-7">
            <path d="M1 10H5L11 3V25L5 18H1Z" fill="none" stroke="#000" strokeWidth="2" />
            <path d="M16 9q4 5 0 10M21 5q7 9 0 18M26 1q9 13 0 26" fill="none" stroke="#000" strokeWidth="1.800" />
          </svg>
        </div>
        <div className="w-[64px] border-2 border-t-0 border-black flex items-center justify-center">
          <svg viewBox="0 0 46 26" className="w-[46px] h-[26px]">
            <rect x="1" y="1" width="44" height="24" rx="2" fill="none" stroke="#000" strokeWidth="2" />
            <path d="M6 7H41M6 13H41" stroke="#000" strokeWidth="2" strokeDasharray="2.200 1.800" />
            <path d="M6 19h4M14 19H32M35 19h5" stroke="#000" strokeWidth="2" />
          </svg>
        </div>
        <div className="w-[128px] border-2 border-t-0 border-black text-center leading-[36px] pt-[1px] tracking-[-0.4px]">
          2:31 PM
          <br />
          11/8/2017
        </div>
        <div className="w-[80px] border-2 border-t-0 border-black flex items-center justify-center">
          <svg viewBox="0 0 32 32" className="w-8 h-8">
            <path d="M1 1H31V25H21L16 30 11 25H1Z" fill="none" stroke="#000" strokeWidth="2" />
          </svg>
        </div>
        <div className="ml-[16px] w-[52px] border-2 border-t-0 border-black rounded-br-[6px] flex items-center justify-center">
          <DesktopIcon />
        </div>
      </div>
    </div>
  </div>
);

export default function App() {
  return (
    <div className="relative w-[2600px] h-[1470px] overflow-hidden bg-white text-black font-['Open_Sans',sans-serif] text-[23px] tracking-[-0.6px] leading-8">
      <DesktopShortcuts />
      <FileExplorer />
      <Browser />
      <Taskbar />
    </div>
  );
}
